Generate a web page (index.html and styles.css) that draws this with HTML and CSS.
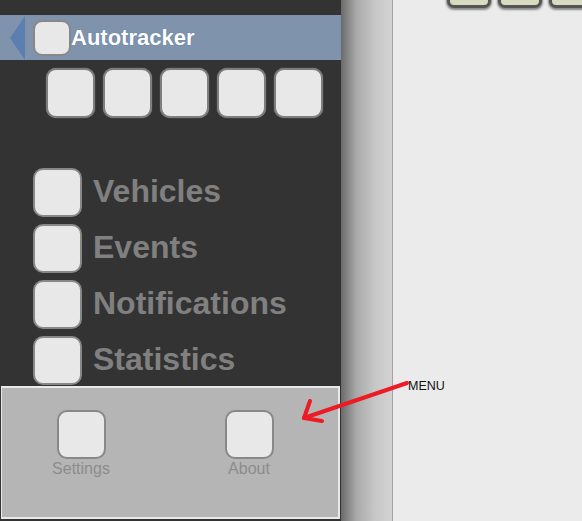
FILE: index.html
```html
<!DOCTYPE html>
<html>
<head>
<meta charset="utf-8">
<link rel="stylesheet" href="styles.css">
</head>
<body>
<div class="app">
  <aside class="panel">
    <div class="header">
      <span class="back"></span>
      <span class="box hbox"></span>
      <span class="title">Autotracker</span>
    </div>
    <div class="tools">
      <span class="box tbox"></span>
      <span class="box tbox"></span>
      <span class="box tbox"></span>
      <span class="box tbox"></span>
      <span class="box tbox"></span>
    </div>
    <ul class="menu">
      <li class="item"><span class="box mbox"></span><span class="label">Vehicles</span></li>
      <li class="item"><span class="box mbox"></span><span class="label">Events</span></li>
      <li class="item"><span class="box mbox"></span><span class="label">Notifications</span></li>
      <li class="item"><span class="box mbox"></span><span class="label">Statistics</span></li>
    </ul>
    <div class="footer">
      <div class="fitem"><span class="box fbox"></span><span class="flabel">Settings</span></div>
      <div class="fitem"><span class="box fbox"></span><span class="flabel">About</span></div>
    </div>
  </aside>
  <div class="shade"></div>
  <main class="main">
    <div class="topbtns">
      <span class="tbtn"></span>
      <span class="tbtn"></span>
      <span class="tbtn"></span>
    </div>
  </main>
</div>
<svg class="annot" width="582" height="521" viewBox="0 0 582 521">
  <g stroke="#ed1c24" stroke-width="4" stroke-linecap="round" fill="none">
    <line x1="407" y1="383" x2="304" y2="418"/>
    <line x1="304" y1="418" x2="310" y2="401"/>
    <line x1="304" y1="418" x2="322" y2="421"/>
  </g>
</svg>
<div class="note">MENU</div>
</body>
</html>
```

FILE: styles.css
```css
html, body {
  margin: 0;
  padding: 0;
}
body {
  background: #ebebeb;
  font-family: "Liberation Sans", Arial, sans-serif;
  width: 582px;
  height: 521px;
  overflow: hidden;
  position: relative;
}
.app {
  display: flex;
  height: 521px;
}
.panel {
  width: 341px;
  flex: none;
  background: #333333;
  display: flex;
  flex-direction: column;
}
.shade {
  width: 51px;
  flex: none;
  background: linear-gradient(to right, #6a6a6a, #a9a9a9 30%, #c6c6c6 65%, #d3d3d3);
  border-right: 1px solid #a2a2a2;
}
.main {
  flex: 1;
  background: #ebebeb;
}
.box {
  display: block;
  box-sizing: border-box;
  background: #e8e8e8;
  border: 2px solid #888888;
  border-radius: 10px;
  flex: none;
}
.header {
  margin-top: 15px;
  height: 45px;
  background: #7f93ad;
  display: flex;
  align-items: center;
}
.back {
  margin-left: 10px;
  width: 0;
  height: 0;
  border-top: 22.5px solid transparent;
  border-bottom: 22.5px solid transparent;
  border-right: 15px solid #5a7fb0;
}
.hbox {
  width: 38px;
  height: 36px;
  margin-left: 8px;
  border-radius: 9px;
}
.title {
  margin-left: 0px;
  color: #ffffff;
  font-weight: bold;
  font-size: 22px;
  text-shadow: 0 0 1px #4a6a9a;
}
.tools {
  display: flex;
  gap: 8px;
  padding: 8px 0 0 46px;
}
.tbox {
  width: 49px;
  height: 50px;
  border-width: 2px;
  border-color: #7e7e7e;
  box-shadow: 0 0 1px #999;
}
.menu {
  list-style: none;
  margin: 0;
  padding: 50px 0 0 33px;
  display: flex;
  flex-direction: column;
  gap: 7px;
}
.item {
  display: flex;
  align-items: center;
  height: 49px;
}
.mbox {
  width: 49px;
  height: 49px;
}
.label {
  margin-left: 11px;
  color: #808080;
  font-weight: bold;
  font-size: 32px;
  position: relative;
  top: -1px;
}
.footer {
  margin-top: 1px;
  flex: 1;
  box-sizing: border-box;
  background: #b5b5b5;
  border: 2px solid #e9e9e9;
  border-left-width: 1px;
  border-right-width: 2px;
  margin-left: 1px;
  margin-right: 1px;
  margin-bottom: 2px;
  display: flex;
  align-items: flex-start;
  padding: 22px 0 0 39px;
  gap: 88px;
}
.fitem {
  width: 80px;
  display: flex;
  flex-direction: column;
  align-items: center;
}
.fbox {
  width: 49px;
  height: 49px;
}
.flabel {
  color: #8c8c8c;
  font-size: 16px;
  line-height: 19px;
}
.topbtns {
  display: flex;
  gap: 7px;
  padding-left: 54px;
  margin-top: -20px;
}
.tbtn {
  display: block;
  width: 44px;
  height: 28px;
  box-sizing: border-box;
  background: #d9dbc0;
  border: 3px solid #555555;
  border-radius: 7px;
  box-shadow: 0 1px 2px 1px #8a8a8a;
  flex: none;
}
.annot {
  position: absolute;
  left: 0;
  top: 0;
  pointer-events: none;
}
.note {
  position: absolute;
  left: 408px;
  top: 379px;
  font-size: 12.5px;
  color: #111111;
}
```
